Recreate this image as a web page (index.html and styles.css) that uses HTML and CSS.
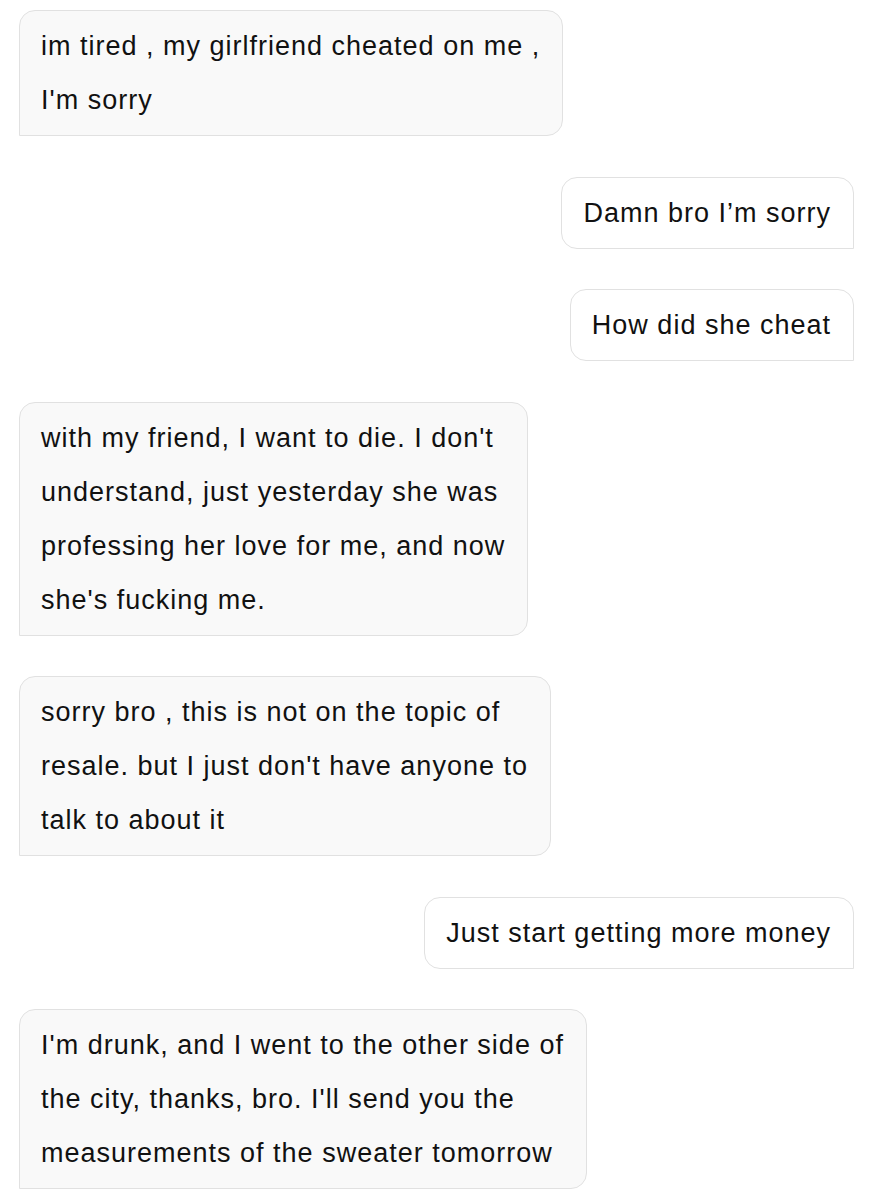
FILE: index.html
```html
<!DOCTYPE html>
<html lang="en">
<head>
<meta charset="utf-8">
<title>Chat</title>
<link rel="stylesheet" href="styles.css">
</head>
<body>
<div class="chat">
  <div class="msg in">im tired , my girlfriend cheated on me ,<br>I'm sorry</div>
  <div class="msg out">Damn bro I’m sorry</div>
  <div class="msg out">How did she cheat</div>
  <div class="msg in">with my friend, I want to die. I don't<br>understand, just yesterday she was<br>professing her love for me, and now<br>she's fucking me.</div>
  <div class="msg in">sorry bro , this is not on the topic of<br>resale. but I just don't have anyone to<br>talk to about it</div>
  <div class="msg out">Just start getting more money</div>
  <div class="msg in">I'm drunk, and I went to the other side of<br>the city, thanks, bro. I'll send you the<br>measurements of the sweater tomorrow</div>
</div>
</body>
</html>
```
FILE: styles.css
```css
html, body {
  margin: 0;
  padding: 0;
  background: #ffffff;
}
body {
  font-family: "Liberation Sans", Arial, sans-serif;
  color: #111111;
}
.chat {
  display: flex;
  flex-direction: column;
  gap: 40.5px;
  padding: 10px 20px 0 19px;
}
.msg {
  font-size: 27px;
  letter-spacing: 1px;
  line-height: 54px;
  white-space: nowrap;
  border: 1px solid #e1e1e1;
  width: fit-content;
}
.in {
  align-self: flex-start;
  background: #f9f9f9;
  padding: 8px 22px 8px 21px;
  border-radius: 16px 16px 16px 0;
}
.out {
  align-self: flex-end;
  background: #ffffff;
  padding: 8px 22px 8px 21px;
  border-radius: 16px 16px 0 16px;
}
```
